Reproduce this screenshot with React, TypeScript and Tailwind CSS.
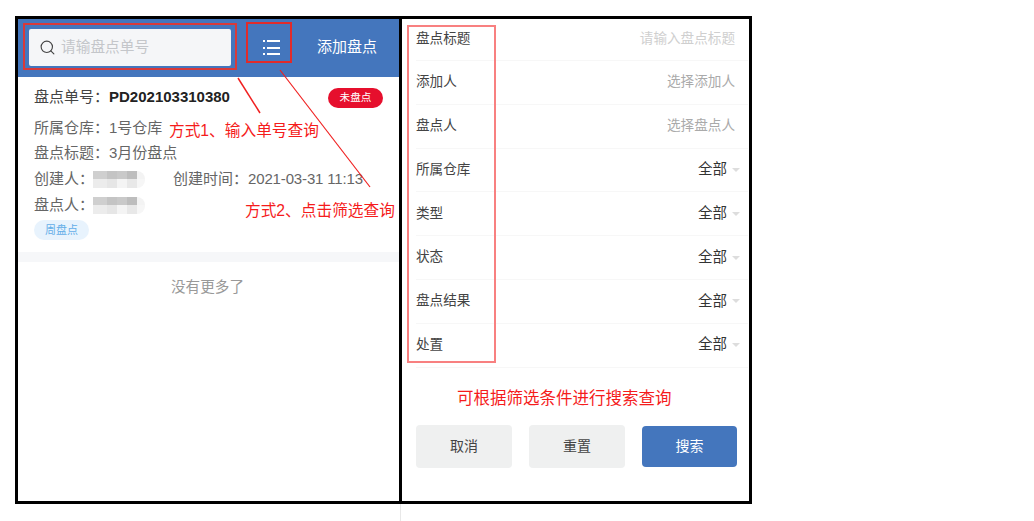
import React from 'react';
import { Search } from 'lucide-react';

const font = { fontFamily: '"Liberation Sans", "Noto Sans CJK SC", sans-serif' };

const filterRows = [
  { label: '盘点标题', value: '请输入盘点标题', kind: 'placeholder' },
  { label: '添加人', value: '选择添加人', kind: 'picker' },
  { label: '盘点人', value: '选择盘点人', kind: 'picker' },
  { label: '所属仓库', value: '全部', kind: 'select' },
  { label: '类型', value: '全部', kind: 'select' },
  { label: '状态', value: '全部', kind: 'select' },
  { label: '盘点结果', value: '全部', kind: 'select' },
  { label: '处置', value: '全部', kind: 'select' },
];

const Blurred = () => (
  <div className="ml-[-1px] grid h-[17px] w-[52px] grid-cols-[14px_10px_10px_10px_8px] grid-rows-2 overflow-hidden rounded-r-lg">
    <div className="bg-[#cfcfcf]" />
    <div className="bg-[#c4c4c4]" />
    <div className="bg-[#c9c9c9]" />
    <div className="bg-[#bdbdbd]" />
    <div className="bg-[#f3f3f3]" />
    <div className="bg-[#ececec]" />
    <div className="bg-[#e6e6e6]" />
    <div className="bg-[#f4f4f4]" />
    <div className="bg-[#e8e8e8]" />
    <div className="bg-[#f6f6f6]" />
  </div>
);

const LeftPanel = () => (
  <div className="relative flex h-[488px] w-[386px] shrink-0 flex-col border-y-[3px] border-l-[3px] border-r-[2px] border-black bg-white">
    <div className="flex h-[58px] shrink-0 items-center bg-[#4476bd] pb-[1px] pl-[11px]">
      <div className="flex h-[37px] w-[202px] items-center rounded-[2px] bg-[#f5f6f8] pl-[10px]">
        <Search size={17} strokeWidth={1.6} className="text-[#444]" />
        <span className="ml-[5px] text-[14.7px] text-[#c4c6ca]">请输盘点单号</span>
      </div>
      <div className="ml-[32px] flex w-[18px] flex-col gap-[4.5px]">
        {[0, 1, 2].map((i) => (
          <div key={i} className="flex items-center gap-[2px]">
            <div className="h-[2px] w-[2px] bg-white" />
            <div className="h-[2px] w-[13px] bg-white" />
          </div>
        ))}
      </div>
      <span className="ml-[36px] text-[15px] text-white">添加盘点</span>
    </div>

    <div className="flex h-[175px] shrink-0 flex-col px-[16px] text-[15px] text-[#666]">
      <div className="mt-[10px] flex h-[20px] items-center justify-between">
        <div className="text-[#444]">
          盘点单号：<span className="font-bold text-[#222]">PD202103310380</span>
        </div>
        <div className="mt-[2px] flex h-[20px] w-[55px] items-center justify-center rounded-full bg-[#e60f2d] text-[10.6px] text-white">未盘点</div>
      </div>
      <div className="mt-[11px] h-[20px] leading-[20px]">所属仓库：1号仓库</div>
      <div className="mt-[5px] h-[20px] leading-[20px]">盘点标题：3月份盘点</div>
      <div className="mt-[6px] flex h-[20px] items-center leading-[20px]">
        <span>创建人：</span>
        <Blurred />
        <span className="ml-[28px] whitespace-nowrap">
          创建时间：<span className="tracking-[-0.15px]">2021-03-31 11:13</span>
        </span>
      </div>
      <div className="mt-[6px] flex h-[20px] items-center leading-[20px]">
        <span>盘点人：</span>
        <Blurred />
      </div>
      <div className="mt-[5px] flex h-[20px] w-[55px] items-center justify-center rounded-full bg-[#e8f3fd] text-[11px] text-[#64aee8]">周盘点</div>
    </div>
    <div className="h-[10px] shrink-0 bg-[#f6f7f9]" />
    <div className="mt-[15px] pr-[2px] text-center text-[14.6px] text-[#999]">没有更多了</div>

    {/* 标注 */}
    <div className="absolute left-[5px] top-[4px] h-[47px] w-[214px] border-2 border-[#d83a3a]" />
    <div className="absolute left-[228px] top-[3px] h-[41px] w-[46px] border-2 border-[#e02b2b]" />
    <svg className="absolute left-0 top-0" width="380" height="200" fill="none" stroke="#f02020">
      <line x1="220" y1="59" x2="242" y2="94" strokeWidth="1.5" />
      <line x1="262" y1="51" x2="352" y2="168" strokeWidth="1.2" />
    </svg>
    <div className="absolute left-[151px] top-[100px] whitespace-nowrap text-[15.7px] text-[#f51c1c]">方式1、输入单号查询</div>
    <div className="absolute left-[227px] top-[180px] whitespace-nowrap text-[15.7px] text-[#f51c1c]">方式2、点击筛选查询</div>
  </div>
);

const RightPanel = () => (
  <div className="relative ml-[-1px] flex h-[488px] w-[352px] shrink-0 flex-col border-y-[3px] border-r-[3px] border-l-[2px] border-black bg-white text-[13.6px]">
    <div className="flex flex-col pl-[14px] pr-[1px]">
      {filterRows.map((row, i) => (
        <div
          key={row.label}
          className={`flex items-center justify-between border-b border-[#f7f7f7] ${i === 0 ? 'h-[42px]' : 'h-[43.8px]'}`}
        >
          <span className="text-[#444]">{row.label}</span>
          {row.kind === 'select' ? (
            <div className="flex items-center pr-[8px]">
              <span className="text-[14.5px] text-[#333]">{row.value}</span>
              <div className="ml-[5px] h-0 w-0 border-x-[4px] border-t-[4px] border-x-transparent border-t-[#dddddd]" />
            </div>
          ) : (
            <span className={`pr-[13px] ${row.kind === 'placeholder' ? 'text-[#cfcfcf]' : 'text-[#aaaaaa]'}`}>{row.value}</span>
          )}
        </div>
      ))}
    </div>
    <div className="mt-[57px] flex items-center pl-[14px] text-[14px]">
      <button className="h-[43px] w-[96px] rounded-[4px] bg-[#eff0f0] text-[#444]">取消</button>
      <button className="ml-[17px] h-[43px] w-[96px] rounded-[4px] bg-[#eff0f0] text-[#444]">重置</button>
      <button className="ml-[17px] h-[41px] w-[95px] rounded-[4px] bg-[#4476bd] text-white">搜索</button>
    </div>

    {/* 标注 */}
    <div className="absolute left-[5px] top-[6px] h-[338px] w-[89px] border-2 border-[#f88080]" />
    <div className="absolute left-[55px] top-[367px] whitespace-nowrap text-[16.5px] text-[#f51c1c]">可根据筛选条件进行搜索查询</div>
  </div>
);

export default function App() {
  return (
    <div className="relative h-[521px] w-[1034px] overflow-hidden bg-white" style={font}>
      <div className="flex pl-[15px] pt-[16px]">
        <LeftPanel />
        <RightPanel />
      </div>
      <div className="ml-[400px] h-[17px] w-[1px] bg-[#e8e8e8]" />
    </div>
  );
}
